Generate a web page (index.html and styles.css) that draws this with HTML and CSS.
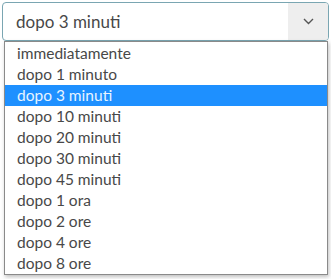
FILE: index.html
```html
<!DOCTYPE html>
<html lang="it">
<head>
<meta charset="utf-8">
<link rel="stylesheet" href="styles.css">
</head>
<body>
<div class="field">
  <div class="select">
    <span class="value">dopo 3 minuti</span>
    <span class="addon">
      <svg width="11" height="7" viewBox="0 0 11 7"><path d="M1 1 L5.5 5.5 L10 1" fill="none" stroke="#555" stroke-width="1.4"/></svg>
    </span>
  </div>
  <ul class="menu">
    <li>immediatamente</li>
    <li>dopo 1 minuto</li>
    <li class="active">dopo 3 minuti</li>
    <li>dopo 10 minuti</li>
    <li>dopo 20 minuti</li>
    <li>dopo 30 minuti</li>
    <li>dopo 45 minuti</li>
    <li>dopo 1 ora</li>
    <li>dopo 2 ore</li>
    <li>dopo 4 ore</li>
    <li>dopo 8 ore</li>
  </ul>
</div>
</body>
</html>
```
FILE: styles.css
```css
html, body {
  margin: 0;
  padding: 0;
  background: #fff;
}
body {
  font-family: Lato, "Open Sans", sans-serif;
  color: #333;
  width: 331px;
  height: 279px;
  overflow: hidden;
}
.field {
  position: relative;
  padding: 2px 2px 0 2px;
}
.select {
  display: flex;
  height: 37px;
  border: 1px solid #7aa6b2;
  border-radius: 4px;
  overflow: hidden;
  background: #fff;
}
.value {
  flex: 1;
  display: flex;
  align-items: center;
  padding-left: 13px;
  font-size: 17px;
  color: #484848;
}
.addon {
  width: 39px;
  background: #eeeeee;
  display: flex;
  align-items: center;
  justify-content: center;
  padding-left: 1px;
}
.menu {
  position: absolute;
  left: 4px;
  top: 41px;
  width: 322px;
  margin: 0;
  padding: 1px 0 0 0;
  list-style: none;
  border: 1px solid #8a8a8a;
  background: #fff;
  box-shadow: 1px 2px 4px rgba(0,0,0,0.25);
}
.menu li {
  height: 21px;
  line-height: 21px;
  padding-left: 12px;
  font-size: 15.5px;
  color: #484848;
}
.menu li.active {
  background: #1e90ff;
  color: #e8f4ff;
}
```
